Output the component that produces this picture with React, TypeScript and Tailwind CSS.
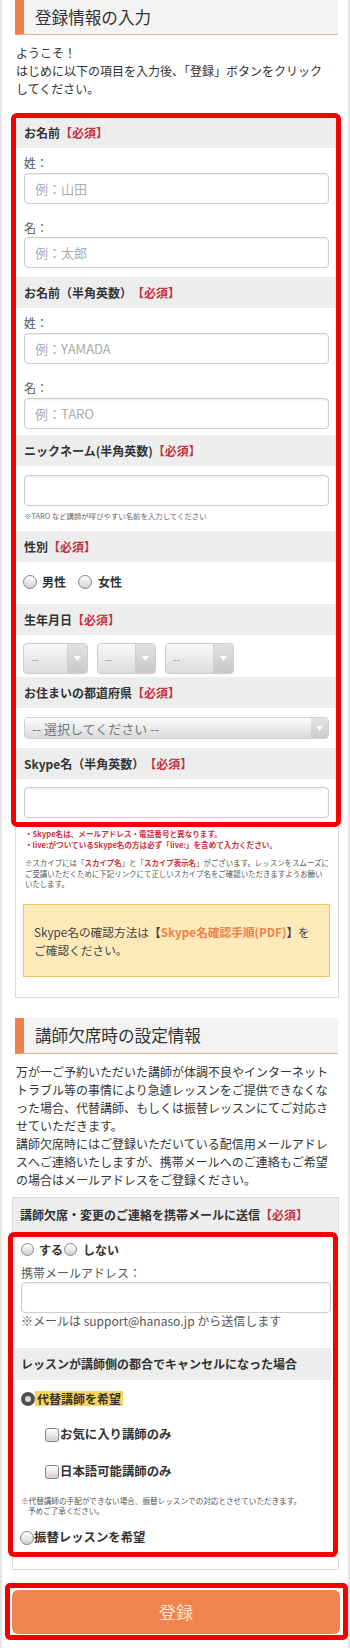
import React from "react";

const Req = () => <span className="text-[#c6323d]">【必須】</span>;

const FieldHead = ({ children, h = "h-[31px]" }: { children: React.ReactNode; h?: string }) => (
  <div className={`${h} bg-[#ededed] flex items-center pl-[8px] text-[12px] font-bold leading-none text-[#333]`}>
    {children}
  </div>
);

const Label = ({ children, mt = "" }: { children: React.ReactNode; mt?: string }) => (
  <div className={`${mt} h-[16px] leading-[16px] text-[12px] text-[#555] pl-[8px]`}>{children}</div>
);

const TextInput = ({ placeholder = "", mt = "" }: { placeholder?: string; mt?: string }) => (
  <input
    readOnly
    placeholder={placeholder}
    className={`${mt} block ml-[8px] w-[305px] h-[31px] rounded-[4px] border border-[#cdcdcd] bg-white shadow-[inset_0_1px_2px_rgba(0,0,0,0.08)] px-[10px] text-[13px] text-[#333] placeholder:text-[#ababab] outline-none`}
  />
);

const Tri = () => (
  <svg width="7" height="5" viewBox="0 0 7 5">
    <path d="M0 0 L7 0 L3.5 5 Z" fill="#ffffff" />
  </svg>
);

const BirthSelect = ({ w, ml }: { w: string; ml: string }) => (
  <div className={`${w} ${ml} h-[31px] rounded-[4px] border border-[#cdcdcd] bg-linear-to-b from-[#f9f9f9] to-[#dcdcdc] flex overflow-hidden`}>
    <div className="flex-1 flex items-center pl-[7px] text-[10px] text-[#999]">--</div>
    <div className="w-[20px] border-l border-[#cfcfcf] bg-linear-to-b from-[#e2e2e2] to-[#c8c8c8] flex items-center justify-center">
      <Tri />
    </div>
  </div>
);

const Radio = ({ size = "w-[14px] h-[14px]" }: { size?: string }) => (
  <span className={`${size} inline-block shrink-0 rounded-full border border-[#858585] bg-linear-to-b from-[#ffffff] to-[#d2d2d2]`} />
);

const RadioOn = () => (
  <span className="w-[14px] h-[14px] inline-flex shrink-0 items-center justify-center rounded-full bg-[#505050]">
    <span className="w-[6px] h-[6px] rounded-full bg-[#d8d8d8]" />
  </span>
);

const Check = () => (
  <span className="w-[14px] h-[14px] inline-block shrink-0 rounded-[3px] border border-[#858585] bg-linear-to-b from-[#ffffff] to-[#d2d2d2]" />
);

const SectionHead = ({ children, h }: { children: React.ReactNode; h: string }) => (
  <div className={`ml-[13px] w-[323px] ${h} bg-[#f3f3f3] border-l-[9px] border-l-[#ef7f4a] border-b border-b-[#f3b08f] flex items-center pl-[11px] text-[16.6px] text-[#333] leading-none`}>
    {children}
  </div>
);

export default function App() {
  return (
    <div className="min-h-[1648px] w-full bg-white border-x-[2px] border-[#e4e4e4] font-['Noto_Sans_CJK_JP',sans-serif] text-[#333]">
      {/* Section 1 header */}
      <SectionHead h="h-[35px]">登録情報の入力</SectionHead>

      <div className="ml-[14px] mt-[9px] text-[12px] leading-[18px] text-[#333] whitespace-nowrap">
        <div>ようこそ！</div>
        <div>はじめに以下の項目を入力後、「登録」ボタンをクリック</div>
        <div>してください。</div>
      </div>

      {/* Red box 1 */}
      <div className="mt-[15px] ml-[9px] w-[330px] border-[5px] border-[#f40000] rounded-[6px] bg-white">
        <FieldHead h="h-[30px]">
          お名前<Req />
        </FieldHead>
        <div className="h-[129px] pt-[7px]">
          <Label>姓：</Label>
          <TextInput mt="mt-[2px]" placeholder="例：山田" />
          <Label mt="mt-[16px]">名：</Label>
          <TextInput mt="mt-[1px]" placeholder="例：太郎" />
        </div>

        <FieldHead>
          お名前（半角英数）<Req />
        </FieldHead>
        <div className="h-[127px] pt-[7px]">
          <Label>姓：</Label>
          <TextInput mt="mt-[2px]" placeholder="例：YAMADA" />
          <Label mt="mt-[16px]">名：</Label>
          <TextInput mt="mt-[2px]" placeholder="例：TARO" />
        </div>

        <FieldHead>
          ニックネーム(半角英数)<Req />
        </FieldHead>
        <div className="h-[65px] pt-[9px]">
          <TextInput />
          <div className="mt-[5px] pl-[8px] h-[10px] leading-[10px] text-[7.4px] text-[#666] whitespace-nowrap">
            ※TARO など講師が呼びやすい名前を入力してください
          </div>
        </div>

        <FieldHead>
          性別<Req />
        </FieldHead>
        <div className="h-[42px] pt-[10px]">
          <div className="h-[20px] flex items-center pl-[7px] text-[12px] font-bold">
            <Radio />
            <span className="ml-[5px]">男性</span>
            <span className="ml-[12px] flex items-center">
              <Radio />
            </span>
            <span className="ml-[6px]">女性</span>
          </div>
        </div>

        <FieldHead>
          生年月日<Req />
        </FieldHead>
        <div className="h-[42px] pt-[8px] flex items-start">
          <BirthSelect w="w-[65px]" ml="ml-[7px]" />
          <BirthSelect w="w-[59px]" ml="ml-[9px]" />
          <BirthSelect w="w-[69px]" ml="ml-[9px]" />
        </div>

        <FieldHead>
          お住まいの都道府県<Req />
        </FieldHead>
        <div className="h-[40px] pt-[9px]">
          <div className="ml-[8px] w-[305px] h-[22px] rounded-[4px] border border-[#d0d0d0] bg-linear-to-b from-[#fbfbfb] to-[#dadada] flex overflow-hidden">
            <div className="flex-1 flex items-center pl-[7px] text-[13px] text-[#777] leading-none">-- 選択してください --</div>
            <div className="w-[17px] bg-linear-to-b from-[#e4e4e4] to-[#cbcbcb] flex items-center justify-center">
              <Tri />
            </div>
          </div>
        </div>

        <FieldHead>
          Skype名（半角英数）<Req />
        </FieldHead>
        <div className="h-[43px] pt-[8px]">
          <TextInput />
        </div>
      </div>

      {/* Card continuation */}
      <div className="ml-[13px] w-[324px] border-x border-b border-[#dcdcdc] pl-[9px] pt-[1px] pb-[20px]">
        <div className="text-[7.6px] leading-[11px] font-bold text-[#d0303c] whitespace-nowrap">
          <div>・Skype名は、メールアドレス・電話番号と異なります。</div>
          <div>・live:がついているSkype名の方は必ず「live:」を含めて入力ください。</div>
        </div>
        <div className="mt-[8px] text-[7.45px] leading-[10.5px] text-[#555] whitespace-nowrap">
          <div>
            ※スカイプには「<span className="font-bold text-[#d0303c]">スカイプ名</span>」と「
            <span className="font-bold text-[#d0303c]">スカイプ表示名</span>」がございます。レッスンをスムーズに
          </div>
          <div>ご受講いただくために下記リンクにて正しいスカイプ名をご確認いただきますようお願い</div>
          <div>いたします。</div>
        </div>
        <div className="mt-[14px] -ml-[2px] w-[307px] h-[73px] bg-[#feeab9] border border-[#f0c55e] pl-[10px] pt-[18px] text-[11.7px] leading-[18px] text-[#444] whitespace-nowrap">
          <div>
            Skype名の確認方法は<span className="font-bold">【<span className="text-[#ef8146]">Skype名確認手順(PDF)</span>】</span>を
          </div>
          <div>ご確認ください。</div>
        </div>
      </div>

      {/* Section 2 */}
      <div className="mt-[20px]">
        <SectionHead h="h-[36px]">講師欠席時の設定情報</SectionHead>
      </div>

      <div className="ml-[14px] mt-[9px] text-[12px] leading-[18px] text-[#333] whitespace-nowrap">
        <div>万が一ご予約いただいた講師が体調不良やインターネット</div>
        <div>トラブル等の事情により急遽レッスンをご提供できなくな</div>
        <div>った場合、代替講師、もしくは振替レッスンにてご対応さ</div>
        <div>せていただきます。</div>
        <div>講師欠席時にはご登録いただいている配信用メールアドレ</div>
        <div>スへご連絡いたしますが、携帯メールへのご連絡もご希望</div>
        <div>の場合はメールアドレスをご登録ください。</div>
      </div>

      <div className="mt-[8px] ml-[10px] w-[327px] border-x border-t border-[#dcdcdc] h-[35px] bg-[#ededed] flex items-center pl-[7px] text-[12px] font-bold leading-none">
        講師欠席・変更のご連絡を携帯メールに送信<Req />
      </div>

      {/* Red box 2 */}
      <div className="ml-[6px] w-[330px] h-[325px] border-[5px] border-[#f40000] rounded-[6px] bg-white">
        <div className="pt-[3px] h-[23px] flex items-center pl-[8px] text-[12px] font-bold">
          <Radio size="w-[13px] h-[13px]" />
          <span className="ml-[5px]">する</span>
          <span className="ml-[1px] flex items-center">
            <Radio size="w-[13px] h-[13px]" />
          </span>
          <span className="ml-[6px]">しない</span>
        </div>
        <div className="mt-[5px] h-[16px] leading-[16px] pl-[8px] text-[12px] text-[#555]">携帯メールアドレス：</div>
        <input
          readOnly
          className="mt-[1px] block ml-[8px] w-[310px] h-[31px] rounded-[4px] border border-[#cdcdcd] bg-white shadow-[inset_0_1px_2px_rgba(0,0,0,0.08)] outline-none"
        />
        <div className="h-[16px] leading-[16px] pl-[8px] text-[12px] text-[#555] whitespace-nowrap">
          ※メールは support@hanaso.jp から送信します
        </div>
        <div className="mt-[19px] ml-[2px] w-[316px] h-[32px] bg-[#ededed] flex items-center pl-[6px] text-[12px] font-bold leading-none">
          レッスンが講師側の都合でキャンセルになった場合
        </div>
        <div className="mt-[9px] h-[20px] flex items-center pl-[8px] text-[12px] font-bold">
          <RadioOn />
          <span className="bg-[#fad45c] h-[15px] leading-[15px] px-[2px]">代替講師を希望</span>
        </div>
        <div className="mt-[16px] h-[20px] flex items-center pl-[32px] text-[12.4px] font-bold">
          <Check />
          <span className="ml-[1px]">お気に入り講師のみ</span>
        </div>
        <div className="mt-[17px] h-[20px] flex items-center pl-[32px] text-[12.4px] font-bold">
          <Check />
          <span className="ml-[1px]">日本語可能講師のみ</span>
        </div>
        <div className="mt-[14px] pl-[8px] text-[7.6px] leading-[10px] text-[#555] whitespace-nowrap">
          <div>※代替講師の手配ができない場合、振替レッスンでの対応とさせていただきます。</div>
          <div className="pl-[7px]">予めご了承ください。</div>
        </div>
        <div className="mt-[12px] h-[20px] flex items-center pl-[7px] text-[12.4px] font-bold">
          <Radio />
          <span>振替レッスンを希望</span>
        </div>
      </div>

      <div className="ml-[10px] w-[327px] h-[13px] border-x border-b border-[#dcdcdc]" />

      {/* Submit button */}
      <div className="mt-[13px] ml-[3px] w-[343px] h-[57px] border-[5px] border-[#f40000] rounded-[5px] pt-[2px] pl-[2px]">
        <div className="w-[328px] h-[44px] rounded-[6px] bg-[#f0844f] flex items-center justify-center text-[17px] text-[#fde4d6] leading-none">
          登録
        </div>
      </div>
    </div>
  );
}
